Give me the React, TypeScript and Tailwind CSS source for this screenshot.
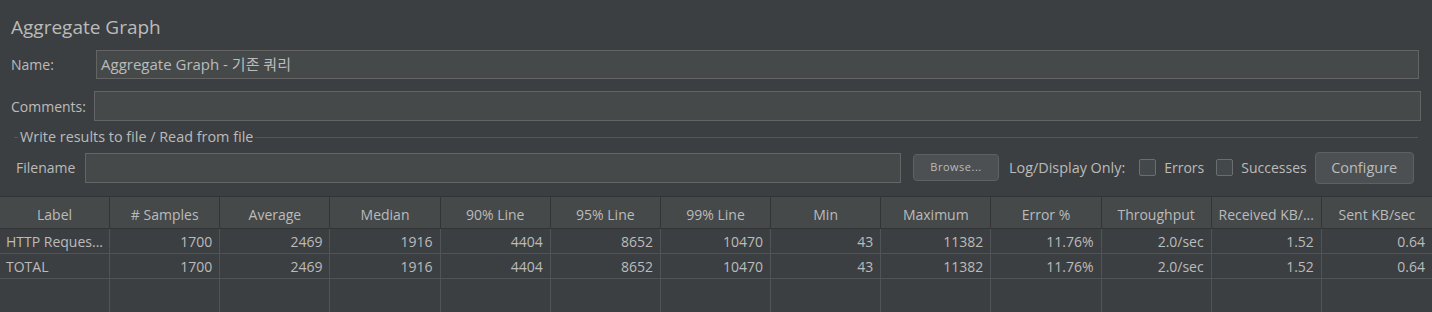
import React from "react";

const columns = [
  "Label",
  "# Samples",
  "Average",
  "Median",
  "90% Line",
  "95% Line",
  "99% Line",
  "Min",
  "Maximum",
  "Error %",
  "Throughput",
  "Received KB/...",
  "Sent KB/sec",
];

const rows = [
  ["HTTP Reques...", "1700", "2469", "1916", "4404", "8652", "10470", "43", "11382", "11.76%", "2.0/sec", "1.52", "0.64"],
  ["TOTAL", "1700", "2469", "1916", "4404", "8652", "10470", "43", "11382", "11.76%", "2.0/sec", "1.52", "0.64"],
];

function Checkbox({ label }: { label: string }) {
  return (
    <div className="flex items-center">
      <span className="w-[17px] h-[17px] rounded-[2px] border border-[#6b6e70] bg-[#43494a]" />
      <span className="ml-[8px]">{label}</span>
    </div>
  );
}

export default function App() {
  return (
    <div className="w-[1432px] h-[312px] overflow-hidden bg-[#3c3f41] text-[#bbbbbb] font-['Segoe_UI','Open_Sans','Noto_Sans_CJK_KR',sans-serif] text-[14px] flex flex-col">
      {/* Title */}
      <div className="h-[50px] pl-[11px] pt-[14px] text-[19px] leading-[26px]">Aggregate Graph</div>

      {/* Name */}
      <div className="flex items-center h-[29px] pl-[11px]">
        <span className="w-[85px]">Name:</span>
        <div className="w-[1323px] h-[29px] border border-[#646464] bg-[#45494a] flex items-center pl-[4px] text-[15px]">
          Aggregate Graph - 기존 쿼리
        </div>
      </div>

      {/* Comments */}
      <div className="flex items-center h-[30px] pl-[11px] mt-[12px]">
        <span className="w-[83px]">Comments:</span>
        <div className="w-[1327px] h-[30px] border border-[#646464] bg-[#45494a]" />
      </div>

      {/* Write results group */}
      <div className="flex items-center h-[14px] mt-[9px] pl-[14px] pr-[14px]">
        <span className="w-[4px] h-px bg-[#555759]" />
        <span className="px-[2px] leading-[14px] text-[14.4px]">Write results to file / Read from file</span>
        <span className="flex-1 h-px bg-[#555759]" />
      </div>

      <div className="flex items-center h-[33px] mt-[7px] pl-[16px]">
        <span className="w-[69px]">Filename</span>
        <div className="w-[816px] h-[30px] border border-[#646464] bg-[#45494a]" />
        <button className="ml-[12px] w-[86px] h-[27px] rounded-[4px] border border-[#5e6163] bg-[#4c5052] text-[11px] tracking-[0.5px] text-[#bbbbbb]">
          Browse...
        </button>
        <span className="ml-[10px] text-[14.4px]">Log/Display Only:</span>
        <div className="ml-[14px]">
          <Checkbox label="Errors" />
        </div>
        <div className="ml-[12px]">
          <Checkbox label="Successes" />
        </div>
        <button className="ml-[8px] w-[99px] h-[32px] rounded-[4px] border border-[#5e6163] bg-[#4c5052] text-[14.5px] text-[#bbbbbb]">
          Configure
        </button>
      </div>

      {/* Table */}
      <div className="mt-[12px] flex-1 flex flex-col border-t border-[#323435]">
        <div className="grid grid-cols-[repeat(13,minmax(0,1fr))] h-[32px] bg-[#45494a] border-b border-[#323435]">
          {columns.map((c) => (
            <div key={c} className="flex items-center justify-center pt-[3px] border-r border-[#323435] last:border-r-0 whitespace-nowrap overflow-hidden">
              {c}
            </div>
          ))}
        </div>
        {rows.map((r, i) => (
          <div key={i} className="grid grid-cols-[repeat(13,minmax(0,1fr))] h-[25px] border-b border-[#515456]">
            {r.map((v, j) => (
              <div
                key={j}
                className={
                  j === 0
                    ? "flex items-center pl-[6px] border-r border-[#515456] whitespace-nowrap overflow-hidden"
                    : "flex items-center justify-end pr-[7px] border-r border-[#515456] last:border-r-0 whitespace-nowrap overflow-hidden"
                }
              >
                {v}
              </div>
            ))}
          </div>
        ))}
        <div className="grid grid-cols-[repeat(13,minmax(0,1fr))] flex-1">
          {columns.map((c) => (
            <div key={c} className="border-r border-[#515456] last:border-r-0" />
          ))}
        </div>
      </div>
    </div>
  );
}
